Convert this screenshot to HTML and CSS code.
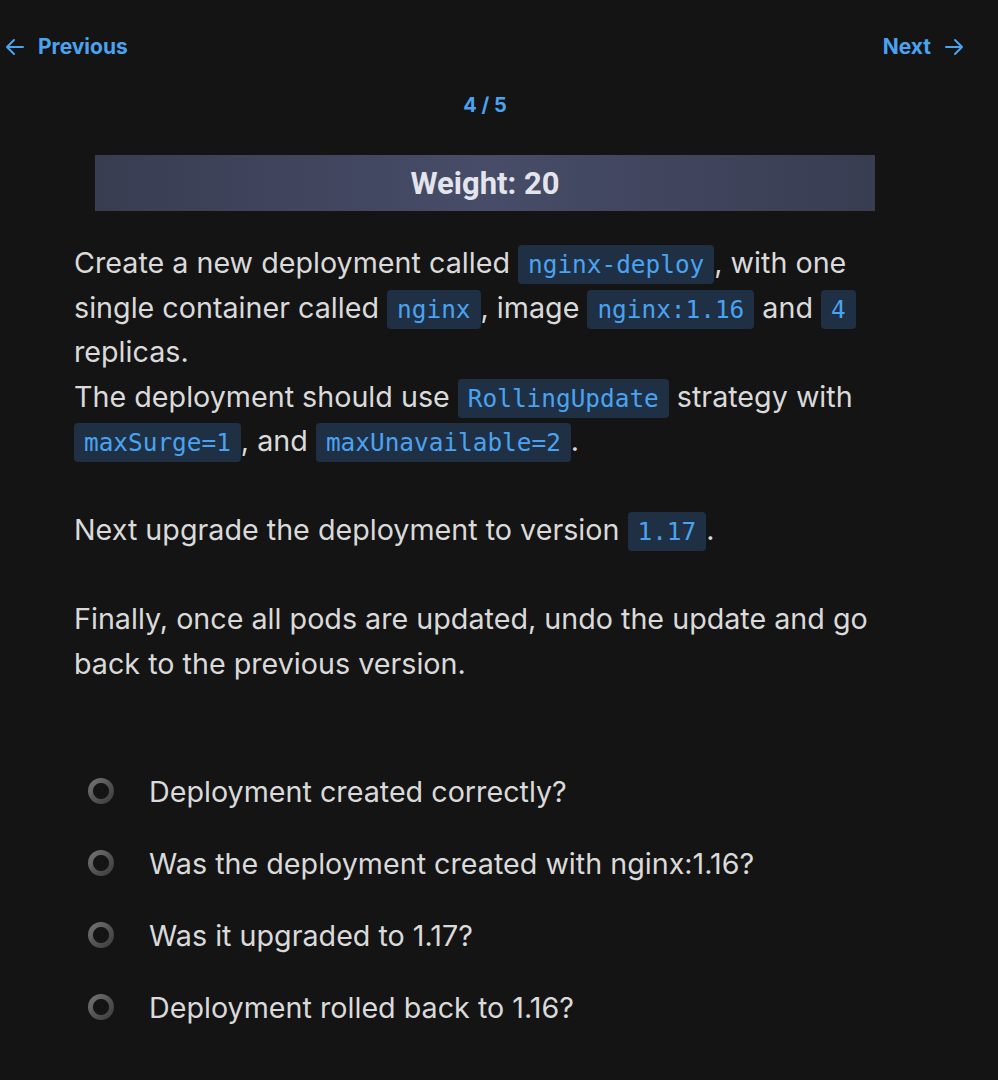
FILE: index.html
```html
<!DOCTYPE html>
<html>
<head>
<meta charset="utf-8">
<link rel="stylesheet" href="styles.css">
</head>
<body>
<div class="page">
  <nav class="nav">
    <a class="nav-link" href="#">
      <svg class="arrow" width="20" height="20" viewBox="0 0 20 20"><path d="M18 10H2M9 3L2 10L9 17" fill="none" stroke="currentColor" stroke-width="2" stroke-linecap="round" stroke-linejoin="round"/></svg>
      <span>Previous</span>
    </a>
    <a class="nav-link" href="#">
      <span>Next</span>
      <svg class="arrow" width="20" height="20" viewBox="0 0 20 20"><path d="M2 10H18M11 3L18 10L11 17" fill="none" stroke="currentColor" stroke-width="2" stroke-linecap="round" stroke-linejoin="round"/></svg>
    </a>
  </nav>
  <div class="counter">4 / 5</div>
  <div class="weight">Weight: 20</div>
  <div class="question">
    <p>Create a new deployment called <code>nginx-deploy</code>, with one single container called <code>nginx</code>, image <code>nginx:1.16</code> and <code>4</code> replicas.<br>The deployment should use <code>RollingUpdate</code> strategy with <code>maxSurge=1</code>, and <code>maxUnavailable=2</code>.</p>
    <p>Next upgrade the deployment to version <code>1.17</code>.</p>
    <p>Finally, once all pods are updated, undo the update and go back to the previous version.</p>
  </div>
  <ul class="checks">
    <li><span class="radio"></span>Deployment created correctly?</li>
    <li><span class="radio"></span>Was the deployment created with nginx:1.16?</li>
    <li><span class="radio"></span>Was it upgraded to 1.17?</li>
    <li><span class="radio"></span>Deployment rolled back to 1.16?</li>
  </ul>
</div>
</body>
</html>
```
FILE: styles.css
```css
html, body {
  margin: 0;
  padding: 0;
  background: #141414;
}
body {
  font-family: Inter, "Noto Sans", sans-serif;
  color: #dadada;
}
.page {
  width: 970px;
  padding-top: 34px;
}
.nav {
  display: flex;
  justify-content: space-between;
  align-items: center;
  padding: 0 6px 0 5px;
}
.nav-link {
  display: flex;
  align-items: center;
  gap: 13px;
  color: #4aa3f0;
  text-decoration: none;
  font-weight: 700;
  font-size: 21px;
  line-height: 26px;
}
.counter {
  text-align: center;
  color: #4aa3f0;
  font-weight: 700;
  font-size: 20px;
  line-height: 24px;
  margin-top: 33px;
}
.weight {
  margin: 38px 95px 0 95px;
  height: 56px;
  display: flex;
  align-items: center;
  justify-content: center;
  background: linear-gradient(90deg, #393d52 0%, #474c68 50%, #393d52 100%);
  font-family: Roboto, Inter, sans-serif;
  font-weight: 700;
  font-size: 31px;
  color: #e4e4ec;
}
.question {
  margin: 30px 0 0 74px;
  width: 805px;
  font-size: 28.7px;
  line-height: 44.5px;
}
.question p {
  margin: 0 0 44.5px 0;
}
code {
  font-family: "DejaVu Sans Mono", monospace;
  font-size: 24.4px;
  line-height: 1;
  color: #4aa3f0;
  background: #1f3044;
  border-radius: 4px;
  padding: 5px 10px;
}
.checks {
  list-style: none;
  margin: 69px 0 0 0;
  padding: 0 0 0 88px;
}
.checks li {
  display: flex;
  align-items: center;
  gap: 35px;
  font-size: 28.7px;
  height: 72px;
}
.radio {
  flex: none;
  width: 26px;
  height: 26px;
  border-radius: 50%;
  background:
    radial-gradient(circle, #141414 0 7.5px, transparent 8.5px),
    linear-gradient(135deg, #7a7a7a 0%, #555 50%, #3a3a3a 100%);
}
```
